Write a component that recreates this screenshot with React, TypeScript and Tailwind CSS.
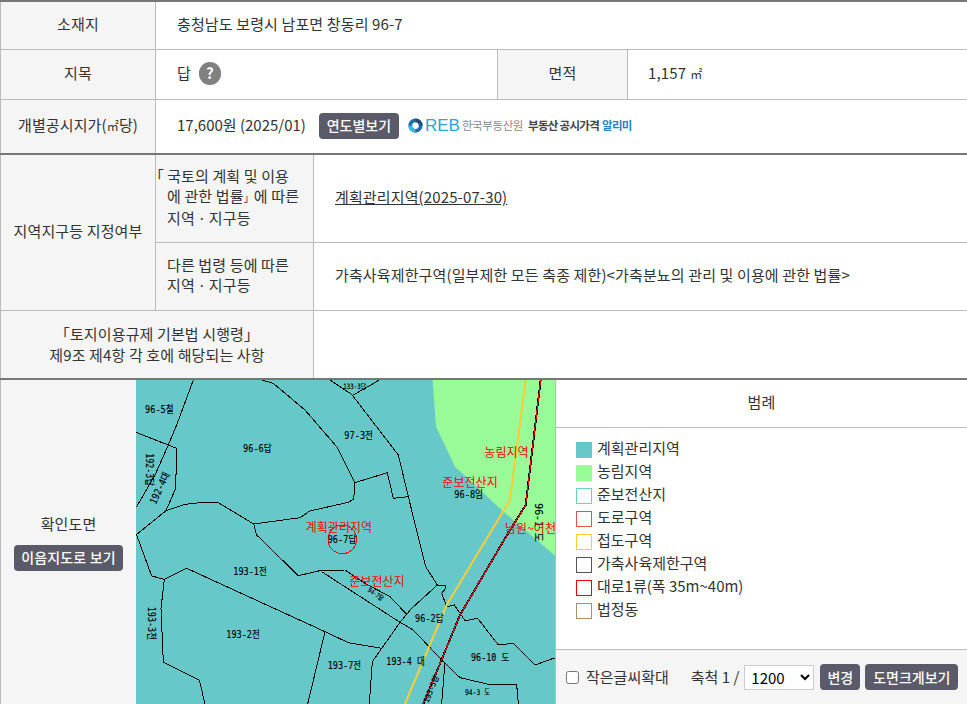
import React from "react";

const th = "flex items-center justify-center bg-[#f5f5f5] text-center";
const rowLine = "border-b border-[#bbbbbb]";
const btn = "flex items-center justify-center rounded-[4px] bg-[#5a5a68] text-white";
const mapFont = "'DejaVu Sans Mono','Noto Sans CJK KR',monospace";

const mapLines = [
  "175,15 125,150 100,210 60,300 5,395",
  "3,172 125,220 122,340 93,407 3,480",
  "93,407 150,388 205,382 248,382 356,447 496,428 524,408 640,382 656,372 660,323 757,293 775,370 820,365",
  "380,15 415,25 510,105 605,215 660,323",
  "585,15 650,58 790,240 820,365 872,575 907,630 930,630 932,640 920,655 935,695 958,690 975,715 990,737 1028,730 1090,810 1135,805 1200,870 1255,850 1262,853",
  "655,60 733,15",
  "356,447 365,480 490,602 555,587 630,585 690,625 765,665 815,718",
  "560,590 795,742 835,765 920,855 975,908 1070,930 1145,928 1150,987",
  "5,480 50,603 88,613 155,580 570,770 640,803 740,820",
  "88,613 78,700 85,862 193,915 210,987",
  "570,770 518,987",
  "907,630 830,700 795,742 712,860 703,987",
  "930,860 920,987",
];

const blackLabels = [
  { x: 30, y: 113, t: "96-5철" },
  { x: 324, y: 231, t: "96-6답" },
  { x: 628, y: 191, t: "97-3전" },
  { x: 958, y: 369, t: "96-8임" },
  { x: 578, y: 504, t: "96-7답" },
  { x: 295, y: 599, t: "193-1전" },
  { x: 274, y: 789, t: "193-2전" },
  { x: 578, y: 881, t: "193-7전" },
  { x: 840, y: 741, t: "96-2답" },
  { x: 754, y: 869, t: "193-4 대" },
  { x: 1008, y: 858, t: "96-10 도" },
];

const redLabels = [
  { x: 1048, y: 247, t: "농림지역" },
  { x: 922, y: 335, t: "준보전산지" },
  { x: 512, y: 471, t: "계획관리지역" },
  { x: 643, y: 632, t: "준보전산지" },
  { x: 1110, y: 474, t: "남원~어천" },
];

const legend = [
  { label: "계획관리지역", box: "bg-[#66c8c8]" },
  { label: "농림지역", box: "bg-[#98fb98]" },
  { label: "준보전산지", box: "border border-[#66d9b0]" },
  { label: "도로구역", box: "border border-[#e85050]" },
  { label: "접도구역", box: "border border-[#ffcc33]" },
  { label: "가축사육제한구역", box: "border border-[#555555]" },
  { label: "대로1류(폭 35m~40m)", box: "border border-[#ff0000]" },
  { label: "법정동", box: "border border-[#a89468]" },
];

// label width in map units: hangul is double the width of digits
const labelWidth = (t: string) => [...t].reduce((w, c) => w + (/[가-힣]/.test(c) ? 28 : 14.5), 0);

function MapDrawing() {
  return (
    <svg viewBox="3 15 1257 972" className="block h-[324px] w-[419px] bg-[#66c8c8]">
      <polygon points="893,15 903,155 960,275 1100,405 1263,545 1263,15" fill="#98fb98" />
      {mapLines.map((p) => (
        <polyline key={p} points={p} fill="none" stroke="#000" strokeWidth="3" shapeRendering="crispEdges" />
      ))}
      <polyline points="1172,15 1125,375 935,690 810,987" fill="none" stroke="#ffcc33" strokeWidth="6" />
      <polyline points="1217,15 1172,390 1110,490 975,720 865,987" fill="none" stroke="#000" strokeWidth="6" shapeRendering="crispEdges" />
      <polyline points="1217,15 1172,390 1110,490 975,720 865,987" fill="none" stroke="#ff0000" strokeWidth="3" shapeRendering="crispEdges" />
      <circle cx="622" cy="493" r="43" fill="none" stroke="#ff0000" strokeWidth="3" shapeRendering="crispEdges" />
      <g fill="#000" stroke="#000" strokeWidth="0.5" fontFamily={mapFont}>
        {blackLabels.map((l) => (
          <text key={l.t} x={l.x} y={l.y} fontSize="32" textLength={labelWidth(l.t)} lengthAdjust="spacingAndGlyphs">
            {l.t}
          </text>
        ))}
        <text x="990" y="960" fontSize="23" textLength="75" lengthAdjust="spacingAndGlyphs">94-3 도</text>
        <text x="697" y="648" fontSize="20" transform="rotate(35 697 648)" textLength="52" lengthAdjust="spacingAndGlyphs">94-7답</text>
        <text x="880" y="985" fontSize="23" transform="rotate(-68 880 985)" textLength="85" lengthAdjust="spacingAndGlyphs">193-5임</text>
        <text x="625" y="41" fontSize="22" textLength="68" lengthAdjust="spacingAndGlyphs">133-3답</text>
        <text x="33" y="235" fontSize="32" transform="rotate(90 33 235)" textLength="98" lengthAdjust="spacingAndGlyphs">192-3답</text>
        <text x="62" y="390" fontSize="30" transform="rotate(-65 62 390)" textLength="102" lengthAdjust="spacingAndGlyphs">192-4대</text>
        <text x="40" y="695" fontSize="32" transform="rotate(90 40 695)" textLength="100" lengthAdjust="spacingAndGlyphs">193-3전</text>
        <text x="1199" y="385" fontSize="32" transform="rotate(90 1199 385)" textLength="115" lengthAdjust="spacingAndGlyphs">96-1 도</text>
      </g>
      {redLabels.map((l) => (
        <text key={l.t + l.x} x={l.x} y={l.y} fontSize="36" fill="#ff0000" fontFamily="'Noto Sans CJK KR',sans-serif">
          {l.t}
        </text>
      ))}
    </svg>
  );
}

function RebLogo() {
  return (
    <div className="flex items-center whitespace-nowrap">
      <svg viewBox="0 0 20 20" className="h-[15px] w-[15px]">
        <circle cx="10" cy="10" r="7" fill="none" stroke="#1b6fa8" strokeWidth="5" />
        <path d="M10 3a7 7 0 0 1 7 7" fill="none" stroke="#1e4e79" strokeWidth="5" />
        <path d="M3 10a7 7 0 0 0 7 7" fill="none" stroke="#35b5e5" strokeWidth="5" />
      </svg>
      <span className="ml-[2px] text-[17px] leading-none font-light text-[#27a5dc] [font-family:'Liberation_Sans',sans-serif]">REB</span>
      <span className="ml-[2px] text-[11.5px] tracking-[-0.4px] text-[#8a8a8a]">한국부동산원</span>
      <span className="ml-[5px] text-[11.5px] font-bold tracking-[-0.7px] text-[#444444]">부동산 공시가격</span>
      <span className="ml-[3px] text-[11.5px] font-bold tracking-[-0.7px] text-[#2a83c9]">알리미</span>
    </div>
  );
}

export default function App() {
  return (
    <div className="h-[704px] w-[967px] overflow-hidden bg-white text-[15px] tracking-[0.13px] text-[#333333] [font-family:'Noto_Sans_CJK_KR','Liberation_Sans',sans-serif]">
      <div className="h-[2px] bg-[#777777]" />

      <div className={`flex h-[48px] ${rowLine}`}>
        <div className={`${th} w-[156px] border-x border-[#bbbbbb] pb-[2px]`}>소재지</div>
        <div className="flex items-center pb-[2px] pl-[21px]">충청남도 보령시 남포면 창동리 96-7</div>
      </div>

      <div className={`flex h-[50px] ${rowLine}`}>
        <div className={`${th} w-[156px] border-x border-[#bbbbbb] pb-[2px]`}>지목</div>
        <div className="flex w-[341px] items-center gap-[8px] pb-[2px] pl-[21px]">
          답
          <span className="flex h-[23px] w-[22px] items-center justify-center rounded-full bg-[#808080] text-[15px] font-bold text-white">?</span>
        </div>
        <div className={`${th} w-[131px] border-x border-[#bbbbbb] pb-[2px]`}>면적</div>
        <div className="flex items-center pb-[2px] pl-[20px]">1,157 <span className="ml-[4px] text-[12px]">㎡</span></div>
      </div>

      <div className="flex h-[55px] border-b-2 border-[#777777]">
        <div className={`${th} w-[156px] border-x border-[#bbbbbb] pb-[2px]`}>
          개별공시지가(<span className="text-[12px]">㎡</span>당)
        </div>
        <div className="flex items-center pb-[2px] pl-[21px] tracking-normal">
          17,600원 (2025/01)
          <span className={`${btn} ml-[13px] h-[26px] w-[80px] text-[14px] font-medium`}>연도별보기</span>
          <span className="ml-[9px]"><RebLogo /></span>
        </div>
      </div>

      <div className={`flex ${rowLine}`}>
        <div className="flex w-[313px]">
          <div className={`${th} w-[156px] border-x border-[#bbbbbb] pb-[2px]`}>지역지구등 지정여부</div>
          <div className="flex-1">
            <div className={`h-[88px] bg-[#f5f5f5] pt-[11px] pl-[11px] leading-[20px] ${rowLine}`}>
              <div><span className="-ml-[18px] mr-[3px]">「</span>국토의 계획 및 이용</div>
              <div>에 관한 법률<span className="text-[10px]">」</span>에 따른</div>
              <div>지역ㆍ지구등</div>
            </div>
            <div className="h-[67px] bg-[#f5f5f5] pt-[12px] pl-[11px] leading-[20px]">
              <div>다른 법령 등에 따른</div>
              <div>지역ㆍ지구등</div>
            </div>
          </div>
        </div>
        <div className="flex-1 border-l border-[#bbbbbb]">
          <div className={`flex h-[88px] items-center pb-[2px] pl-[21px] ${rowLine}`}>
            <span className="underline">계획관리지역(2025-07-30)</span>
          </div>
          <div className="flex h-[67px] items-center pb-[2px] pl-[21px]">
            가축사육제한구역(일부제한 모든 축종 제한)&lt;가축분뇨의 관리 및 이용에 관한 법률&gt;
          </div>
        </div>
      </div>

      <div className="flex h-[69px] border-b-2 border-[#777777]">
        <div className={`${th} w-[314px] border-x border-[#bbbbbb] pb-[2px] leading-[21px]`}>
          「토지이용규제 기본법 시행령」<br />제9조 제4항 각 호에 해당되는 사항
        </div>
      </div>

      <div className="flex h-[324px]">
        <div className="flex w-[136px] flex-col items-center justify-center border-l border-[#bbbbbb] bg-[#f5f5f5]">
          <span>확인도면</span>
          <span className={`${btn} mt-[9px] h-[26px] w-[109px] text-[14px] font-medium`}>이음지도로 보기</span>
        </div>
        <MapDrawing />
        <div className="flex flex-1 flex-col border-l border-[#bbbbbb]">
          <div className={`flex h-[48px] items-center justify-center pb-[2px] ${rowLine}`}>범례</div>
          <div className="flex flex-1 flex-col gap-[7px] pt-[14px] pl-[20px] tracking-normal">
            {legend.map((item) => (
              <div key={item.label} className="flex h-[16px] items-center gap-[5px] whitespace-nowrap">
                <span className={`h-[16px] w-[16px] ${item.box}`} />
                <span className="-mt-[4px]">{item.label}</span>
              </div>
            ))}
          </div>
          <div className="flex h-[55px] items-center border-t border-[#bbbbbb] bg-[#f5f5f5] pl-[10px] tracking-normal">
            <input type="checkbox" className="h-[13px] w-[13px]" />
            <span className="ml-[7px]">작은글씨확대</span>
            <span className="ml-[22px]">축척 1 /</span>
            <select defaultValue="1200" className="ml-[5px] h-[25px] w-[70px] border border-[#cccccc] bg-white pl-[2px] text-black">
              <option>1200</option>
            </select>
            <span className={`${btn} ml-[6px] h-[26px] w-[40px] text-[14px] font-medium`}>변경</span>
            <span className={`${btn} ml-[5px] h-[26px] w-[93px] text-[14px] font-medium`}>도면크게보기</span>
          </div>
        </div>
      </div>
    </div>
  );
}
